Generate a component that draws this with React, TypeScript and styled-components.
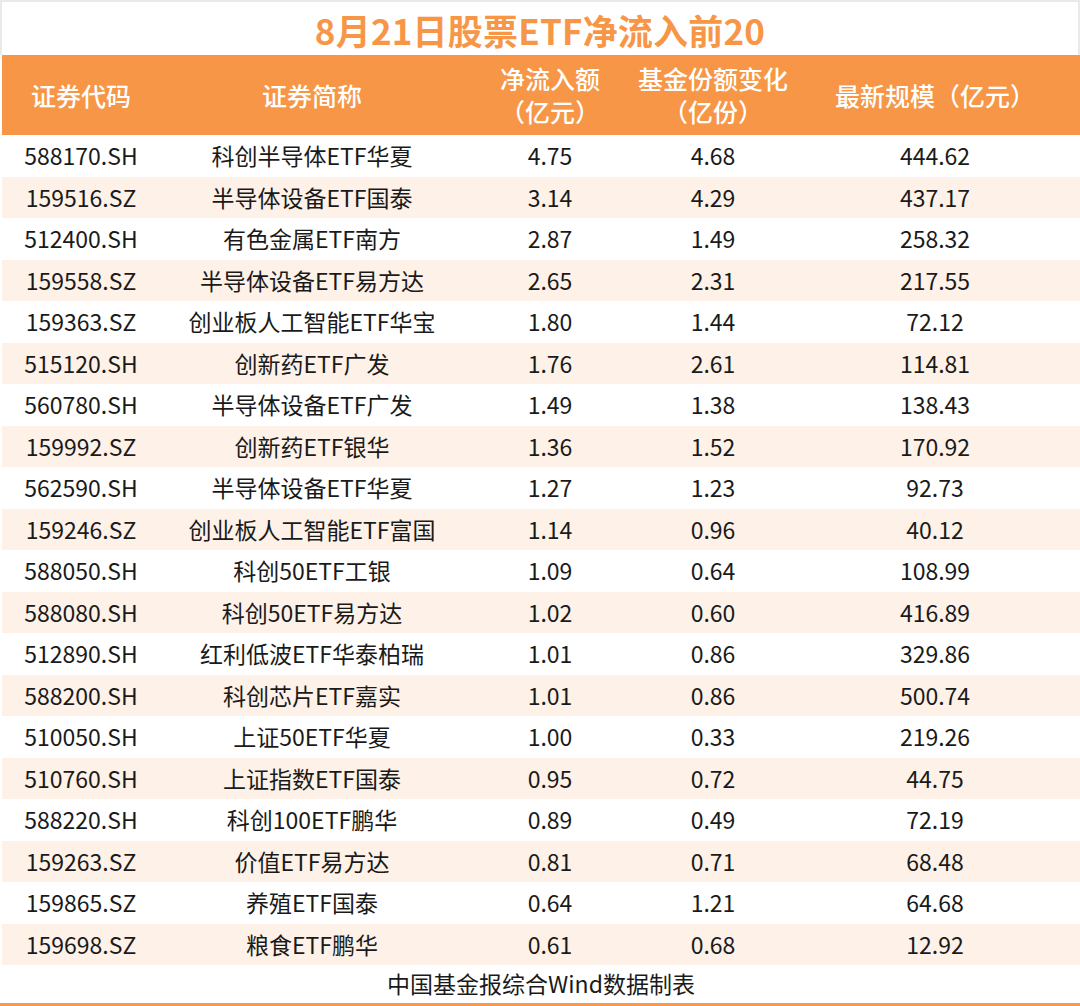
import React from 'react';
import styled, { createGlobalStyle } from 'styled-components';

const GlobalStyle = createGlobalStyle`
  html, body {
    margin: 0;
    padding: 0;
    background: #ffffff;
  }
  body {
    font-family: "Noto Sans CJK SC", "Noto Sans", sans-serif;
    color: #1a1a1a;
  }
`;

const Page = styled.div`
  width: 1080px;
  height: 1006px;
  box-sizing: border-box;
  display: flex;
  flex-direction: column;
  background: #ffffff;
  border-bottom: 3px solid #f59a52;
`;

const TitleBar = styled.div`
  height: 55px;
  box-sizing: border-box;
  border-top: 2px solid #e9e9e9;
  border-left: 2px solid #e9e9e9;
  border-right: 2px solid #e9e9e9;
  display: flex;
  align-items: center;
  justify-content: center;
`;

const Title = styled.h1`
  margin: 0;
  padding-top: 2px;
  font-size: 35px;
  font-weight: 700;
  line-height: 1;
  color: #f79646;
  letter-spacing: 0.2px;
`;

const Table = styled.div`
  margin-left: 2px;
  display: grid;
  grid-template-columns: 158px 304px 172px 154px 1fr;
`;

const HeaderCell = styled.div`
  height: 80px;
  background: #f79646;
  color: #ffffff;
  font-size: 25px;
  font-weight: 500;
  line-height: 33px;
  display: flex;
  flex-direction: column;
  align-items: center;
  justify-content: center;
  text-align: center;
`;

const Cell = styled.div<{ $striped: boolean }>`
  height: 41.5px;
  background: ${({ $striped }) => ($striped ? '#fdf1e8' : '#ffffff')};
  font-size: 23px;
  line-height: 41.5px;
  text-align: center;
  white-space: nowrap;
  color: #1a1a1a;
`;

const Footer = styled.div`
  flex: 1;
  display: flex;
  align-items: center;
  justify-content: center;
  font-size: 23px;
  color: #1a1a1a;
  padding-left: 2px;
  padding-bottom: 3px;
`;

type Row = [string, string, string, string, string];

const rows: Row[] = [
  ['588170.SH', '科创半导体ETF华夏', '4.75', '4.68', '444.62'],
  ['159516.SZ', '半导体设备ETF国泰', '3.14', '4.29', '437.17'],
  ['512400.SH', '有色金属ETF南方', '2.87', '1.49', '258.32'],
  ['159558.SZ', '半导体设备ETF易方达', '2.65', '2.31', '217.55'],
  ['159363.SZ', '创业板人工智能ETF华宝', '1.80', '1.44', '72.12'],
  ['515120.SH', '创新药ETF广发', '1.76', '2.61', '114.81'],
  ['560780.SH', '半导体设备ETF广发', '1.49', '1.38', '138.43'],
  ['159992.SZ', '创新药ETF银华', '1.36', '1.52', '170.92'],
  ['562590.SH', '半导体设备ETF华夏', '1.27', '1.23', '92.73'],
  ['159246.SZ', '创业板人工智能ETF富国', '1.14', '0.96', '40.12'],
  ['588050.SH', '科创50ETF工银', '1.09', '0.64', '108.99'],
  ['588080.SH', '科创50ETF易方达', '1.02', '0.60', '416.89'],
  ['512890.SH', '红利低波ETF华泰柏瑞', '1.01', '0.86', '329.86'],
  ['588200.SH', '科创芯片ETF嘉实', '1.01', '0.86', '500.74'],
  ['510050.SH', '上证50ETF华夏', '1.00', '0.33', '219.26'],
  ['510760.SH', '上证指数ETF国泰', '0.95', '0.72', '44.75'],
  ['588220.SH', '科创100ETF鹏华', '0.89', '0.49', '72.19'],
  ['159263.SZ', '价值ETF易方达', '0.81', '0.71', '68.48'],
  ['159865.SZ', '养殖ETF国泰', '0.64', '1.21', '64.68'],
  ['159698.SZ', '粮食ETF鹏华', '0.61', '0.68', '12.92'],
];

const App = () => {
  return (
    <>
      <GlobalStyle />
      <Page>
        <TitleBar>
          <Title>8月21日股票ETF净流入前20</Title>
        </TitleBar>
        <Table>
          <HeaderCell>证券代码</HeaderCell>
          <HeaderCell>证券简称</HeaderCell>
          <HeaderCell>
            <span>净流入额</span>
            <span>（亿元）</span>
          </HeaderCell>
          <HeaderCell>
            <span>基金份额变化</span>
            <span>（亿份）</span>
          </HeaderCell>
          <HeaderCell>最新规模（亿元）</HeaderCell>
          {rows.map((row, i) =>
            row.map((value, j) => (
              <Cell key={`${i}-${j}`} $striped={i % 2 === 1}>
                {value}
              </Cell>
            ))
          )}
        </Table>
        <Footer>中国基金报综合Wind数据制表</Footer>
      </Page>
    </>
  );
};

export default App;
